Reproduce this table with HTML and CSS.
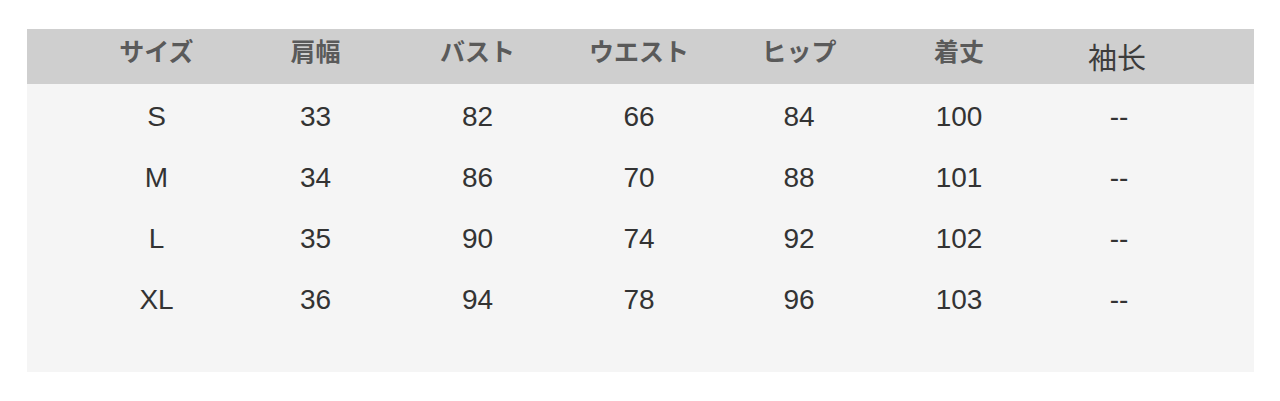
FILE: index.html
```html
<!DOCTYPE html>
<html lang="ja">
<head>
<meta charset="utf-8">
<title>サイズ表</title>
<link rel="stylesheet" href="styles.css">
</head>
<body>
<div class="chart">
  <div class="row head">
    <div class="cell">サイズ</div>
    <div class="cell">肩幅</div>
    <div class="cell">バスト</div>
    <div class="cell">ウエスト</div>
    <div class="cell">ヒップ</div>
    <div class="cell">着丈</div>
    <div class="cell alt">袖长</div>
  </div>
  <div class="body">
    <div class="row data">
      <div class="cell">S</div><div class="cell">33</div><div class="cell">82</div><div class="cell">66</div><div class="cell">84</div><div class="cell">100</div><div class="cell">--</div>
    </div>
    <div class="row data">
      <div class="cell">M</div><div class="cell">34</div><div class="cell">86</div><div class="cell">70</div><div class="cell">88</div><div class="cell">101</div><div class="cell">--</div>
    </div>
    <div class="row data">
      <div class="cell">L</div><div class="cell">35</div><div class="cell">90</div><div class="cell">74</div><div class="cell">92</div><div class="cell">102</div><div class="cell">--</div>
    </div>
    <div class="row data">
      <div class="cell">XL</div><div class="cell">36</div><div class="cell">94</div><div class="cell">78</div><div class="cell">96</div><div class="cell">103</div><div class="cell">--</div>
    </div>
  </div>
</div>
</body>
</html>
```

FILE: styles.css
```css
html, body {
  margin: 0;
  padding: 0;
  background: #ffffff;
}

.chart {
  margin: 29px 0 0 27px;
  width: 1227px;
}

.row {
  display: grid;
  grid-template-columns: 157px 161px 163px 160px 160px 160px 160px;
  padding-left: 51px;
}

.cell {
  text-align: center;
}

.head {
  background: #cfcfcf;
  height: 55px;
  box-sizing: border-box;
  padding-top: 9px;
  align-items: start;
}

.head .cell {
  font-family: "Noto Sans CJK JP", "Noto Sans", sans-serif;
  font-weight: 700;
  font-size: 25px;
  line-height: 1;
  color: #5a5a5a;
}

.head .cell.alt {
  font-weight: 400;
  font-size: 29px;
  color: #3c3c3c;
  padding-top: 4px;
  padding-right: 4px;
}

.body {
  background: #f5f5f5;
  height: 288px;
  box-sizing: border-box;
  padding-top: 2px;
}

.data {
  height: 61px;
  line-height: 61px;
  font-family: "Liberation Sans", Arial, sans-serif;
  font-size: 28px;
  color: #333333;
}
```
